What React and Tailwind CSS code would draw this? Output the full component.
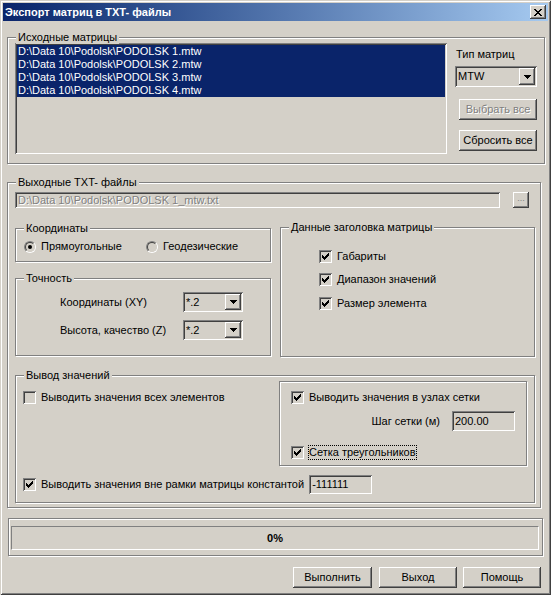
const raised = "shadow-[inset_-1px_-1px_0_#404040,inset_1px_1px_0_#ffffff,inset_-2px_-2px_0_#808080,inset_2px_2px_0_#d4d0c8]";
const sunken = "shadow-[inset_1px_1px_0_#808080,inset_-1px_-1px_0_#ffffff,inset_2px_2px_0_#404040,inset_-2px_-2px_0_#d4d0c8]";
const etched = "border border-[#808080] shadow-[inset_1px_1px_0_#ffffff,1px_1px_0_#ffffff]";

function Group({ label, className = "", children }) {
  return (
    <div className={`relative ${etched} ${className}`}>
      {label && (
        <span className="absolute left-[8px] -top-[7px] bg-[#d4d0c8] px-[2px] leading-[13px] whitespace-nowrap">
          {label}
        </span>
      )}
      {children}
    </div>
  );
}

function Check({ checked }) {
  return (
    <span className={`relative block w-[13px] h-[13px] shrink-0 bg-[#d4d0c8] ${sunken}`}>
      {checked && (
        <svg className="absolute left-0 top-0" width="13" height="13" viewBox="0 0 13 13" shapeRendering="crispEdges">
          <path
            transform="translate(3 3)"
            d="M0 2H1V3H2V4H3V3H4V2H5V1H6V0H7V3H6V4H5V5H4V6H3V7H2V6H1V5H0Z"
            fill="#000"
          />
        </svg>
      )}
    </span>
  );
}

function CheckRow({ checked, label, className = "", focus }) {
  return (
    <div className={`flex items-center ${className}`}>
      <Check checked={checked} />
      {focus ? (
        <span className="ml-[4px] border border-dotted border-black px-[0px] leading-[13px] whitespace-nowrap">{label}</span>
      ) : (
        <span className="ml-[5px] leading-[13px] whitespace-nowrap">{label}</span>
      )}
    </div>
  );
}

function Radio({ checked }) {
  return (
    <span className="relative block w-[12px] h-[12px] shrink-0 rounded-full border border-t-[#808080] border-l-[#808080] border-b-[#ffffff] border-r-[#ffffff]">
      <span className="absolute inset-0 rounded-full border border-t-[#404040] border-l-[#404040] border-b-[#d4d0c8] border-r-[#d4d0c8] bg-[#d4d0c8] flex items-center justify-center">
        {checked && <span className="block w-[4px] h-[4px] rounded-full bg-black" />}
      </span>
    </span>
  );
}

function Arrow() {
  return (
    <svg width="7" height="4" viewBox="0 0 7 4" shapeRendering="crispEdges">
      <path d="M0 0H7V1H6V2H5V3H4V4H3V3H2V2H1V1H0Z" fill="#000" />
    </svg>
  );
}

function Combo({ value, className = "" }) {
  return (
    <div className={`flex bg-[#d4d0c8] p-[2px] ${sunken} ${className}`}>
      <span className="flex-1 flex items-center pl-[1px] leading-[13px]">{value}</span>
      <span className={`flex items-center justify-center w-[16px] bg-[#d4d0c8] ${raised}`}>
        <Arrow />
      </span>
    </div>
  );
}

function Btn({ children, className = "", disabled }) {
  return (
    <div
      className={`flex items-center justify-center leading-[13px] ${raised} ${className} ${
        disabled ? "text-[#808080] [text-shadow:1px_1px_0_#ffffff]" : ""
      }`}
    >
      {children}
    </div>
  );
}

function Field({ value, className = "", disabled }) {
  return (
    <div
      className={`flex items-center bg-[#d4d0c8] pl-[3px] leading-[13px] whitespace-nowrap overflow-hidden ${sunken} ${className} ${
        disabled ? "text-[#808080] [text-shadow:1px_1px_0_#ffffff]" : ""
      }`}
    >
      {value}
    </div>
  );
}

const files = [
  "D:\\Data 10\\Podolsk\\PODOLSK 1.mtw",
  "D:\\Data 10\\Podolsk\\PODOLSK 2.mtw",
  "D:\\Data 10\\Podolsk\\PODOLSK 3.mtw",
  "D:\\Data 10\\Podolsk\\PODOLSK 4.mtw",
];

export default function App() {
  return (
    <div className="w-[551px] h-[595px] bg-[#d4d0c8] p-[3px] font-['Liberation_Sans',Arial,sans-serif] text-[11px] leading-[13px] text-black shadow-[inset_1px_1px_0_#d4d0c8,inset_-1px_-1px_0_#404040,inset_2px_2px_0_#ffffff,inset_-2px_-2px_0_#808080] select-none">
      {/* Title bar */}
      <div className="h-[18px] flex items-center bg-gradient-to-r from-[#0a246a] to-[#a6caf0] pl-[2px] pr-[2px]">
        <span className="flex-1 text-white font-bold text-[11px] leading-[14px] whitespace-nowrap">
          Экспорт матриц в TXT- файлы
        </span>
        <span className={`flex items-center justify-center w-[16px] h-[14px] bg-[#d4d0c8] ${raised}`}>
          <svg width="8" height="7" viewBox="0 0 8 7" shapeRendering="crispEdges">
            <path
              d="M0 0h2v1h-2zM6 0h2v1h-2zM1 1h2v1h-2zM5 1h2v1h-2zM2 2h4v1h-4zM3 3h2v1h-2zM2 4h4v1h-4zM1 5h2v1h-2zM5 5h2v1h-2zM0 6h2v1h-2zM6 6h2v1h-2z"
              fill="#000"
            />
          </svg>
        </span>
      </div>

      {/* Исходные матрицы */}
      <Group label="Исходные матрицы" className="ml-[4px] mt-[16px] w-[538px] h-[127px]">
        <div className="flex pl-[7px] pt-[5px]">
          <div className={`w-[432px] h-[111px] bg-[#d4d0c8] p-[2px] ${sunken}`}>
            {files.map((f) => (
              <div key={f} className="h-[13px] bg-[#0a246a] text-white pl-[1px] leading-[13px] whitespace-nowrap">
                {f}
              </div>
            ))}
          </div>
          <div className="ml-[8px] flex flex-col pt-[5px]">
            <span className="leading-[13px] pl-[1px]">Тип матриц</span>
            <Combo value="MTW" className="mt-[5px] w-[82px] h-[21px]" />
            <Btn disabled className="mt-[12px] ml-[4px] w-[78px] h-[21px]">
              Выбрать все
            </Btn>
            <Btn className="mt-[10px] ml-[4px] w-[78px] h-[21px]">Сбросить все</Btn>
          </div>
        </div>
      </Group>

      {/* Выходные TXT- файлы */}
      <Group label="Выходные TXT- файлы" className="ml-[4px] mt-[18px] w-[534px] h-[326px]">
        <div className="flex items-center pl-[7px] mt-[9px]">
          <Field disabled value={"D:\\Data 10\\Podolsk\\PODOLSK 1_mtw.txt"} className="w-[485px] h-[16px]" />
          <Btn className="ml-[13px] w-[16px] h-[16px] text-[9px] items-end pb-[3px] text-[#808080]">...</Btn>
        </div>

        <div className="flex pl-[7px] mt-[19px]">
          <div className="w-[256px] flex flex-col">
            <Group label="Координаты" className="mt-[1px] h-[34px]">
              <div className="flex items-center pl-[8px] mt-[11px]">
                <div className="w-[122px] flex items-center">
                  <Radio checked />
                  <span className="ml-[5px] leading-[13px]">Прямоугольные</span>
                </div>
                <div className="flex items-center">
                  <Radio />
                  <span className="ml-[5px] leading-[13px]">Геодезические</span>
                </div>
              </div>
            </Group>
            <Group label="Точность" className="mt-[16px] h-[78px]">
              <div className="flex items-center pl-[44px] mt-[13px]">
                <span className="w-[123px] leading-[13px]">Координаты (XY)</span>
                <Combo value="*.2" className="w-[60px] h-[20px]" />
              </div>
              <div className="flex items-center pl-[44px] mt-[8px]">
                <span className="w-[123px] leading-[13px]">Высота, качество (Z)</span>
                <Combo value="*.2" className="w-[60px] h-[20px]" />
              </div>
            </Group>
          </div>
          <Group label="Данные заголовка матрицы" className="ml-[9px] w-[255px] h-[130px]">
            <div className="flex flex-col pl-[38px] pt-[22px]">
              <CheckRow checked label="Габариты" />
              <CheckRow checked label="Диапазон значений" className="mt-[10px]" />
              <CheckRow checked label="Размер элемента" className="mt-[11px]" />
            </div>
          </Group>
        </div>

        <Group label="Вывод значений" className="ml-[7px] mt-[18px] w-[520px] h-[128px]">
          <div className="flex mt-[5px]">
            <div className="w-[263px] pl-[7px] pt-[10px]">
              <CheckRow label="Выводить значения всех элементов" />
            </div>
            <Group className="w-[248px] h-[85px]">
              <CheckRow checked label="Выводить значения в узлах сетки" className="pl-[11px] mt-[9px]" />
              <div className="flex items-center justify-end pr-[11px] mt-[7px]">
                <span className="leading-[13px]">Шаг сетки (м)</span>
                <Field value="200.00" className="ml-[12px] w-[63px] h-[20px]" />
              </div>
              <CheckRow checked focus label="Сетка треугольников" className="pl-[11px] mt-[14px]" />
            </Group>
          </div>
          <div className="flex items-center h-[19px] pl-[7px] mt-[9px]">
            <CheckRow checked label="Выводить значения вне рамки матрицы константой" />
            <Field value="-111111" className="ml-[5px] w-[63px] h-[19px]" />
          </div>
        </Group>
      </Group>

      {/* Progress */}
      <Group className="ml-[5px] mt-[10px] w-[535px] h-[38px]">
        <div className="pl-[2px] pt-[7px]">
          <div className="w-[528px] h-[24px] flex items-center justify-center border border-t-[#808080] border-l-[#808080] border-b-[#ffffff] border-r-[#ffffff] font-bold">
            0%
          </div>
        </div>
      </Group>

      {/* Buttons */}
      <div className="flex justify-end mt-[11px] mr-[7px]">
        <Btn className="w-[79px] h-[21px]">Выполнить</Btn>
        <Btn className="ml-[7px] w-[78px] h-[21px]">Выход</Btn>
        <Btn className="ml-[6px] w-[78px] h-[21px]">Помощь</Btn>
      </div>
    </div>
  );
}
